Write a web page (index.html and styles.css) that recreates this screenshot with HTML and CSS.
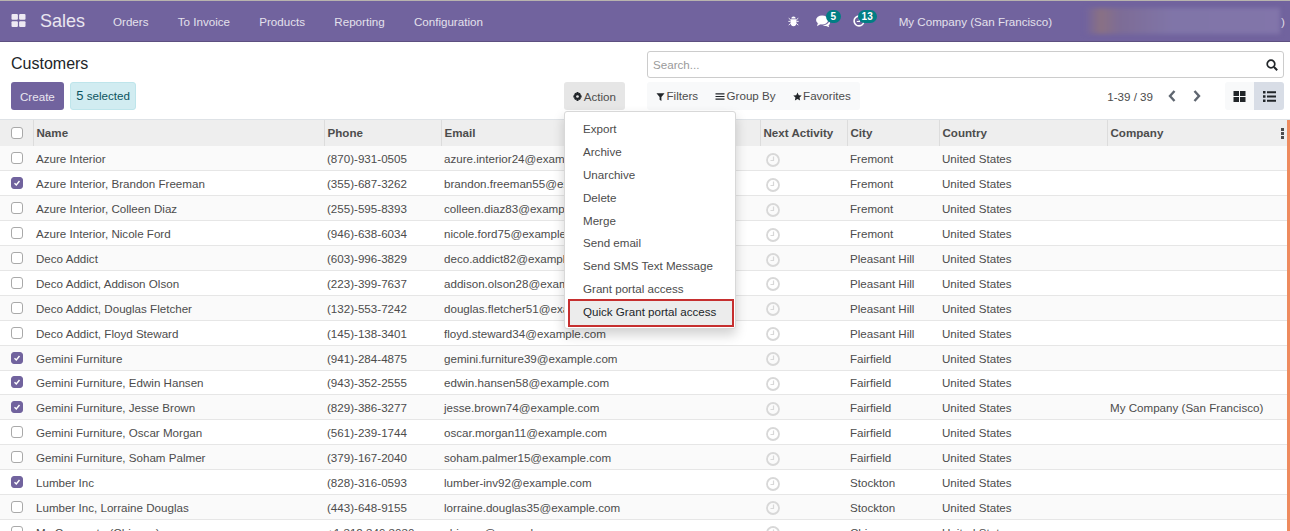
FILE: index.html
```html
<!DOCTYPE html>
<html lang="en">
<head>
    <meta charset="UTF-8">
    <title>Customers - Sales</title>
    <link rel="stylesheet" href="styles.css">
</head>
<body>
    <header class="navbar">
        <svg class="apps-icon" viewBox="0 0 14 14"><rect x="0" y="0" width="6.4" height="5.8" rx="1"/><rect x="7.6" y="0" width="6.4" height="5.8" rx="1"/><rect x="0" y="7.2" width="6.4" height="5.8" rx="1"/><rect x="7.6" y="7.2" width="6.4" height="5.8" rx="1"/></svg>
        <span class="brand">Sales</span>
        <nav class="menu">
            <a>Orders</a>
            <a>To Invoice</a>
            <a>Products</a>
            <a>Reporting</a>
            <a>Configuration</a>
        </nav>
        <div class="systray">
            <svg class="bug-icon" viewBox="0 0 12 12"><path d="M3.6 3.2a2.4 2.2 0 0 1 4.8 0zM2.8 4h6.4v4.2a3.2 3.4 0 0 1-6.4 0z"/><path d="M.8 3l2 1.6M11.2 3l-2 1.6M.4 6.4h2.4M11.6 6.4H9.2M.8 10.4l2.2-1.8M11.2 10.4 9 8.6" stroke="#fff" stroke-width="1" fill="none"/></svg>
            <span class="tray-item chat-item">
                <svg class="chat-icon" viewBox="0 0 16 14"><ellipse cx="6.5" cy="5.4" rx="6.5" ry="4.8"/><path d="M2 8.5 1 12l4-2.4zM14.4 6c1.4 2.2.6 4.2-1 5.2l.8 2-3.4-1.4c-1.6.2-2.8-.1-3.8-.7 3.600 0 6.800-2 7.400-5.100z"/></svg>
                <span class="badge chat-badge">5</span>
            </span>
            <span class="tray-item clock-item">
                <svg class="clock-icon" viewBox="0 0 14 14"><circle cx="7" cy="7" r="5.700" fill="none" stroke="#fff" stroke-width="1.900"/><path d="M7.500 4v3.600H4.400" fill="none" stroke="#fff" stroke-width="1.400"/></svg>
                <span class="badge clock-badge">13</span>
            </span>
            <span class="company">My Company (San Francisco)</span>
            <span class="user-blur"></span>
            <span class="user-paren">)</span>
        </div>
    </header>

    <section class="control-panel">
        <div class="cp-left">
            <h1 class="page-title">Customers</h1>
            <div class="cp-buttons">
                <button class="btn-create">Create</button>
                <span class="selected-pill"><span class="selected-num">5</span> selected</span>
                <button class="btn-action"><svg class="mini-icon" viewBox="0 0 10 10"><path d="M4 0h2l.3 1.4 1-.5 1.500 1.500-.6 1 1.400.4v2.200l-1.400.4.6 1-1.500 1.500-1-.6L6 10H4l-.3-1.700-1 .6L1.200 7.400l.6-1L.4 6V3.800l1.400-.4-.6-1L2.700.9l1 .5z"/><circle cx="5" cy="5" r="1.500" fill="#e6e6e6"/></svg>Action</button>
            </div>
        </div>
        <div class="cp-right">
            <div class="search-box">
                <span class="search-placeholder">Search...</span>
                <svg class="search-icon" viewBox="0 0 12 12"><circle cx="5" cy="5" r="3.800" fill="none" stroke="#212529" stroke-width="1.700"/><path d="m8 8 3.200 3.200" stroke="#212529" stroke-width="2"/></svg>
            </div>
            <div class="cp-tools">
                <div class="search-options">
                    <span class="opt"><svg class="mini-icon" viewBox="0 0 10 10"><path d="M.5 1.500h9L6 5.500V10L4 8.500v-3z"/></svg>Filters</span>
                    <span class="opt"><svg class="bars-icon" viewBox="0 0 10 10"><path d="M0 1.500h10v1.200H0zM0 4.400h10v1.200H0zM0 7.300h10v1.200H0z"/></svg>Group By</span>
                    <span class="opt"><svg class="mini-icon" viewBox="0 0 10 10"><path d="m5 .5 1.400 3 3.300.4-2.400 2.200.6 3.300L5 7.800 2.100 9.400l.6-3.300L.3 3.900l3.300-.4z"/></svg>Favorites</span>
                </div>
                <div class="pager">
                    <span class="pager-value">1-39 / 39</span>
                    <svg class="pager-arrow" viewBox="0 0 10 14"><path d="M7.500 2 3 7l4.500 5" fill="none" stroke="#5f6670" stroke-width="2.400"/></svg>
                    <svg class="pager-arrow" viewBox="0 0 10 14"><path d="M2.500 2 7 7l-4.500 5" fill="none" stroke="#5f6670" stroke-width="2.400"/></svg>
                </div>
                <div class="view-switch">
                    <span class="view-btn"><svg viewBox="0 0 12 11"><path d="M0 0h5.500v5H0zM6.500 0H12v5H6.500zM0 6h5.500v5H0zM6.500 6H12v5H6.500z"/></svg></span>
                    <span class="view-btn active"><svg viewBox="0 0 13 11"><path d="M0 0h2.500v2.500H0zM4 .3h9v2H4zM0 4.200h2.500v2.500H0zM4 4.500h9v2H4zM0 8.400h2.500v2.500H0zM4 8.700h9v2H4z"/></svg></span>
                </div>
            </div>
        </div>
    </section>

    <main class="list-wrap">
        <table class="list-table">
            <colgroup>
                <col class="col-check"><col class="col-name"><col class="col-phone"><col class="col-email"><col class="col-activity"><col class="col-city"><col class="col-country"><col>
            </colgroup>
            <thead>
                <tr>
                    <th class="check-cell"><span class="checkbox"></span></th>
                    <th>Name</th>
                    <th>Phone</th>
                    <th>Email</th>
                    <th>Next Activity</th>
                    <th>City</th>
                    <th>Country</th>
                    <th class="company-head">Company<span class="col-options"><i></i><i></i><i></i></span></th>
                </tr>
            </thead>
            <tbody id="rows"></tbody>
        </table>

        <div class="action-menu">
            <a>Export</a>
            <a>Archive</a>
            <a>Unarchive</a>
            <a>Delete</a>
            <a>Merge</a>
            <a>Send email</a>
            <a>Send SMS Text Message</a>
            <a>Grant portal access</a>
            <a class="highlighted">Quick Grant portal access</a>
        </div>
    </main>

    <script>
        var customers = [
            ['Azure Interior', '(870)-931-0505', 'azure.interior24@example.com', 'Fremont', '', 0],
            ['Azure Interior, Brandon Freeman', '(355)-687-3262', 'brandon.freeman55@example.com', 'Fremont', '', 1],
            ['Azure Interior, Colleen Diaz', '(255)-595-8393', 'colleen.diaz83@example.com', 'Fremont', '', 0],
            ['Azure Interior, Nicole Ford', '(946)-638-6034', 'nicole.ford75@example.com', 'Fremont', '', 0],
            ['Deco Addict', '(603)-996-3829', 'deco.addict82@example.com', 'Pleasant Hill', '', 0],
            ['Deco Addict, Addison Olson', '(223)-399-7637', 'addison.olson28@example.com', 'Pleasant Hill', '', 0],
            ['Deco Addict, Douglas Fletcher', '(132)-553-7242', 'douglas.fletcher51@example.com', 'Pleasant Hill', '', 0],
            ['Deco Addict, Floyd Steward', '(145)-138-3401', 'floyd.steward34@example.com', 'Pleasant Hill', '', 0],
            ['Gemini Furniture', '(941)-284-4875', 'gemini.furniture39@example.com', 'Fairfield', '', 1],
            ['Gemini Furniture, Edwin Hansen', '(943)-352-2555', 'edwin.hansen58@example.com', 'Fairfield', '', 1],
            ['Gemini Furniture, Jesse Brown', '(829)-386-3277', 'jesse.brown74@example.com', 'Fairfield', 'My Company (San Francisco)', 1],
            ['Gemini Furniture, Oscar Morgan', '(561)-239-1744', 'oscar.morgan11@example.com', 'Fairfield', '', 0],
            ['Gemini Furniture, Soham Palmer', '(379)-167-2040', 'soham.palmer15@example.com', 'Fairfield', '', 0],
            ['Lumber Inc', '(828)-316-0593', 'lumber-inv92@example.com', 'Stockton', '', 1],
            ['Lumber Inc, Lorraine Douglas', '(443)-648-9155', 'lorraine.douglas35@example.com', 'Stockton', '', 0],
            ['Mc Corporate (Chicago)', '+1 312 349 3030', 'chicago@example.com', 'Chicago', '', 0]
        ];

        var clock = '<svg class="activity-icon" viewBox="0 0 14 14"><circle cx="7" cy="7" r="6" fill="none" stroke="#d8d8d8" stroke-width="1.800"/><path d="M7.500 3.500v4H4.500" fill="none" stroke="#d8d8d8" stroke-width="1.200"/></svg>';
        var tbody = document.getElementById('rows');

        customers.forEach(function (c) {
            var row = tbody.insertRow();
            var box = c[5] ? '<span class="checkbox checked"><svg viewBox="0 0 10 10"><path d="M2.500 5.200 4.300 7l3.200-4" fill="none" stroke="#fff" stroke-width="1.400"/></svg></span>' : '<span class="checkbox"></span>';
            row.innerHTML = '<td class="check-cell">' + box + '</td><td>' + c[0] + '</td><td>' + c[1] + '</td><td>' + c[2] + '</td><td class="activity-cell">' + clock + '</td><td>' + c[3] + '</td><td>United States</td><td>' + c[4] + '</td>';
        });
    </script>
</body>
</html>
```

FILE: styles.css
```css
html, body {
    height: 531px;
    overflow: hidden;
}
body {
    margin: 0;
    font-family: 'Liberation Sans', Arial, sans-serif;
    font-size: 11.6px;
    color: #4c4c4c;
    background-color: #fff;
}
.navbar {
    display: flex;
    align-items: center;
    height: 42px;
    padding-left: 11px;
    box-sizing: border-box;
    background-color: #71639e;
    border-top: 1px solid #b8b4ae;
    border-bottom: 1px solid #5d5080;
    color: #e4e1ec;
}
.apps-icon {
    width: 15px;
    height: 14px;
    fill: #eeeaf3;
}
.brand {
    margin-left: 14px;
    font-size: 18px;
    color: #e9e6f0;
}
.menu {
    display: flex;
    gap: 29.3px;
    margin-left: 28px;
}
.systray {
    display: flex;
    align-items: center;
    margin-left: auto;
}
.bug-icon {
    width: 11px;
    height: 12px;
    fill: #fff;
}
.tray-item {
    position: relative;
    display: flex;
}
.chat-item {
    margin-left: 17px;
}
.clock-item {
    margin-left: 22px;
}
.chat-icon {
    width: 15px;
    height: 13px;
    fill: #fff;
}
.clock-icon {
    width: 12px;
    height: 12px;
}
.badge {
    position: absolute;
    top: -5px;
    height: 13px;
    border-radius: 7px;
    background-color: #017e84;
    color: #fff;
    font-size: 10px;
    font-weight: 700;
    line-height: 13px;
    text-align: center;
}
.chat-badge {
    left: 10px;
    width: 15px;
}
.clock-badge {
    left: 5px;
    width: 19px;
}
.company {
    margin-left: 34px;
}
.user-blur {
    width: 195px;
    height: 26px;
    margin-left: 33px;
    background: linear-gradient(90deg, #71639e 0, #8a7184 8%, #7d6c96 18%, #8075a8 45%, #8275aa 100%);
    filter: blur(2px);
}
.user-paren {
    width: 4px;
    margin-left: 1px;
    margin-right: 5px;
}
.control-panel {
    display: flex;
    justify-content: space-between;
    height: 78px;
    padding: 9px 6px 0 11px;
    box-sizing: border-box;
    border-bottom: 1px solid #dee2e6;
}
.cp-left {
    width: 614px;
}
.page-title {
    margin: 1px 0 0;
    font-size: 16px;
    font-weight: 400;
    line-height: 23px;
    color: #212529;
}
.cp-buttons {
    display: flex;
    align-items: center;
    gap: 6px;
    margin-top: 7px;
}
.btn-create {
    height: 28px;
    padding: 0 9px;
    border: 0;
    border-radius: 3px;
    background-color: #71639e;
    color: #e9e6f0;
    font: inherit;
}
.selected-pill {
    height: 26px;
    padding: 0 5.5px;
    border: 1px solid #bee5eb;
    border-radius: 3px;
    background-color: #d1ecf1;
    color: #0c5460;
    line-height: 26px;
}
.selected-num {
    font-size: 13px;
}
.btn-action {
    display: flex;
    align-items: center;
    height: 28px;
    margin-left: auto;
    padding: 0 9px;
    border: 0;
    border-radius: 3px;
    background-color: #e6e6e6;
    color: #4c4c4c;
    font: inherit;
}
.mini-icon, .bars-icon {
    width: 9px;
    height: 9px;
    margin-right: 2px;
    fill: #212529;
}
.bars-icon {
    width: 10px;
}
.cp-right {
    width: 637px;
}
.search-box {
    display: flex;
    align-items: center;
    justify-content: space-between;
    padding: 0 5px;
    border: 1px solid #ccc;
    border-radius: 3px;
    height: 25px;
}
.search-placeholder {
    color: #9a9a9a;
}
.search-icon {
    width: 12px;
    height: 12px;
}
.cp-tools {
    display: flex;
    align-items: center;
    margin-top: 4px;
}
.search-options {
    display: flex;
    gap: 17px;
    height: 28px;
    padding: 0 9px;
    border-radius: 3px;
    background-color: #f8f9fa;
    line-height: 28px;
    color: #4c4c4c;
}
.opt svg {
    margin-right: 1.5px;
    vertical-align: -1px;
}
.pager {
    display: flex;
    align-items: center;
    gap: 15px;
    margin-left: auto;
}
.pager-value {
    margin-right: -1px;
}
.pager-arrow {
    width: 10px;
    height: 14px;
}
.view-switch {
    display: flex;
    margin-left: 23px;
}
.view-btn {
    display: flex;
    align-items: center;
    justify-content: center;
    width: 29px;
    height: 28px;
    background-color: #f8f9fa;
    border-radius: 3px 0 0 3px;
}
.view-btn.active {
    width: 30px;
    background-color: #d8dde6;
    border-radius: 0 3px 3px 0;
}
.view-btn svg {
    width: 13px;
    height: 11px;
    fill: #212529;
}
.list-wrap {
    position: relative;
    border-right: 3px solid #ee8a5e;
}
.list-table {
    width: 100%;
    border-collapse: collapse;
    table-layout: fixed;
}
.col-check { width: 33px; }
.col-name { width: 291px; }
.col-phone { width: 117px; }
.col-email { width: 319px; }
.col-activity { width: 87px; }
.col-city { width: 92px; }
.col-country { width: 168px; }
.list-table th {
    height: 26px;
    padding: 0 3px 2px;
    box-sizing: border-box;
    border-left: 1px solid #dcdcdc;
    background-color: #eee;
    color: #4c4c4c;
    font-weight: 700;
    text-align: left;
}
.list-table th:first-child {
    border-left: 0;
}
.list-table td {
    height: 24.9px;
    padding: 1px 3px 0;
    box-sizing: border-box;
    border-bottom: 1px solid #e6e6e6;
    white-space: nowrap;
    overflow: hidden;
}
.list-table tbody tr:nth-child(odd) {
    background-color: #fafafa;
}
.list-table .check-cell {
    padding: 0 0 0 11px;
}
.checkbox {
    display: block;
    width: 10px;
    height: 10px;
    border: 1px solid #a9a9a9;
    border-radius: 3px;
    background-color: #fff;
}
.checkbox.checked {
    border-color: #71639e;
    background-color: #71639e;
}
.checkbox svg {
    display: block;
}
.activity-icon {
    display: block;
    width: 14px;
    height: 14px;
    margin: 2px 0 0 3px;
}
.company-head {
    position: relative;
}
.col-options {
    position: absolute;
    top: 8px;
    right: 3px;
    display: flex;
    flex-direction: column;
    gap: 1px;
}
.col-options i {
    width: 3px;
    height: 3px;
    background-color: #4c4c4c;
}
.action-menu {
    position: absolute;
    top: -9px;
    left: 564px;
    width: 170px;
    padding: 6px 0 1px;
    background-color: #fff;
    border: 1px solid #d8d8d8;
    border-radius: 3px;
    box-shadow: 0 6px 12px rgba(0, 0, 0, 0.18);
}
.action-menu a {
    display: block;
    height: 22.9px;
    padding-left: 18px;
    line-height: 22.9px;
    color: #4c4c4c;
}
.action-menu a.highlighted {
    position: relative;
    height: 28px;
    margin: -2px 1px 0 3px;
    padding-left: 13px;
    box-sizing: border-box;
    border: 2px solid #c62f2f;
    background-color: #ececec;
    color: #212529;
    line-height: 22px;
}
```
